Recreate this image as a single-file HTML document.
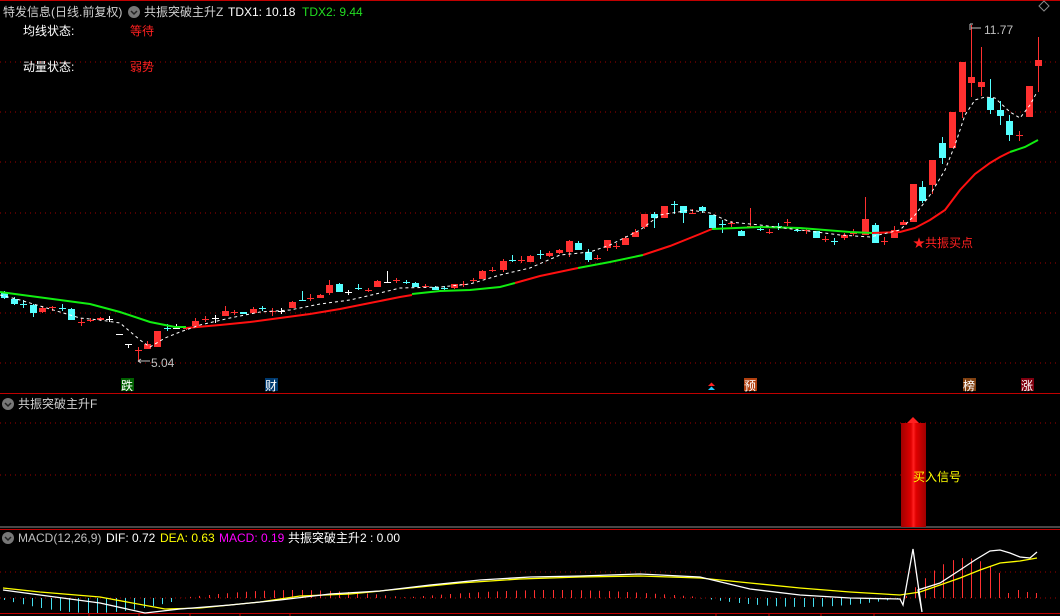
<!DOCTYPE html>
<html><head><meta charset="utf-8"><style>
html,body{margin:0;padding:0;background:#000;width:1060px;height:616px;overflow:hidden}
svg{display:block}
text{font-family:"Liberation Sans","Noto Sans CJK SC",sans-serif;font-size:12px}
</style></head><body>
<svg id="s" width="1060" height="616" xmlns="http://www.w3.org/2000/svg">
<defs>
<linearGradient id="col" x1="0" x2="1">
<stop offset="0" stop-color="#a00000"/><stop offset="0.4" stop-color="#e00000"/><stop offset="0.5" stop-color="#ff2020"/><stop offset="0.6" stop-color="#e00000"/><stop offset="1" stop-color="#a00000"/>
</linearGradient>
</defs>
<line x1="0" y1="0.5" x2="1060" y2="0.5" stroke="#c00000"/>
<g stroke="#a00000" stroke-dasharray="1 4">
<line x1="0" y1="62" x2="1060" y2="62"/><line x1="0" y1="112" x2="1060" y2="112"/>
<line x1="0" y1="162" x2="1060" y2="162"/><line x1="0" y1="213" x2="1060" y2="213"/>
<line x1="0" y1="263" x2="1060" y2="263"/><line x1="0" y1="313" x2="1060" y2="313"/>
<line x1="0" y1="363" x2="1060" y2="363"/>
<line x1="0" y1="423" x2="1060" y2="423"/><line x1="0" y1="475" x2="1060" y2="475"/>
<line x1="0" y1="572" x2="1060" y2="572"/><line x1="0" y1="598" x2="1060" y2="598"/>
</g>
<line x1="0" y1="393.5" x2="1060" y2="393.5" stroke="#c00000"/>
<line x1="0" y1="527" x2="1060" y2="527" stroke="#909090"/>
<line x1="0" y1="529.5" x2="1060" y2="529.5" stroke="#c00000"/>
<line x1="0" y1="613.5" x2="1060" y2="613.5" stroke="#c00000"/>
<g id="cd"></g>
<g id="ln" fill="none"></g>
<!-- header -->
<text x="3" y="16" fill="#d0d0d0">特发信息(日线.前复权)</text>
<circle cx="134" cy="12" r="6" fill="#777"/><path d="M131 11 l3 3 l3 -3" stroke="#222" stroke-width="1.5" fill="none"/>
<text x="144" y="16" fill="#d0d0d0">共振突破主升Z</text>
<text x="228" y="16" fill="#fff">TDX1: 10.18</text>
<text x="302" y="16" fill="#22dd22">TDX2: 9.44</text>
<text x="23" y="35" fill="#fff">均线状态:</text><text x="130" y="35" fill="#ff2020">等待</text>
<text x="23" y="71" fill="#fff">动量状态:</text><text x="130" y="71" fill="#ff2020">弱势</text>
<text x="151" y="367" fill="#c0c0c0">5.04</text>
<path d="M138 361 h12 M138 361 l3 -2 M138 361 l3 2" stroke="#c0c0c0" fill="none"/>
<text x="984" y="34" fill="#c0c0c0">11.77</text>
<path d="M970 24 v6 M970 24 h3 M971 28 h10" stroke="#c0c0c0" fill="none"/>
<path d="M1044 1 l5 5 -5 5 -5 -5z" stroke="#888" fill="none"/>
<text x="913" y="247" fill="#ff2020" font-size="12">★共振买点</text>
<!-- labels -->
<rect x="121" y="378" width="13" height="13" fill="#006000"/><text x="121" y="390" fill="#fff">跌</text>
<rect x="265" y="378" width="13" height="13" fill="#003a70"/><text x="265" y="390" fill="#fff">财</text>
<path d="M708 386 l3.5 -3.5 3.5 3.5z" fill="#ff2020"/><path d="M708 390 l3.5 -3.5 3.5 3.5z" fill="#22ccff"/>
<rect x="744" y="378" width="13" height="13" fill="#b04010"/><text x="744" y="390" fill="#fff">预</text>
<rect x="963" y="378" width="13" height="13" fill="#804010"/><text x="963" y="390" fill="#fff">榜</text>
<rect x="1021" y="378" width="13" height="13" fill="#800010"/><text x="1021" y="390" fill="#fff">涨</text>
<!-- panel2 -->
<circle cx="8" cy="404" r="6" fill="#777"/><path d="M5 403 l3 3 l3 -3" stroke="#222" stroke-width="1.5" fill="none"/>
<text x="18" y="408" fill="#d0d0d0">共振突破主升F</text>
<rect x="901" y="423" width="25" height="104" fill="url(#col)"/>
<path d="M907 423 l6 -6 6 6z" fill="#ff2020"/>
<text x="913" y="481" fill="#ffff00">买入信号</text>
<!-- macd header -->
<circle cx="8" cy="538" r="6" fill="#777"/><path d="M5 537 l3 3 l3 -3" stroke="#222" stroke-width="1.5" fill="none"/>
<text x="18" y="542" fill="#c0c0c0">MACD(12,26,9)</text>
<text x="106" y="542" fill="#fff">DIF: 0.72</text>
<text x="160" y="542" fill="#ffff00">DEA: 0.63</text>
<text x="219" y="542" fill="#ff00ff">MACD: 0.19</text>
<text x="288" y="542" fill="#fff">共振突破主升2 : 0.00</text>
<g stroke="#c00000"><line x1="89" y1="613" x2="89" y2="616"/><line x1="139" y1="613" x2="139" y2="616"/><line x1="190" y1="613" x2="190" y2="616"/><line x1="240" y1="613" x2="240" y2="616"/><line x1="290" y1="613" x2="290" y2="616"/><line x1="716" y1="613" x2="716" y2="616"/><line x1="769" y1="613" x2="769" y2="616"/><line x1="821" y1="613" x2="821" y2="616"/><line x1="874" y1="613" x2="874" y2="616"/></g>
</svg>
<script>
var NS="http://www.w3.org/2000/svg";
function el(p,t,a){var e=document.createElementNS(NS,t);for(var k in a)e.setAttribute(k,a[k]);p.appendChild(e);return e;}
var cd=document.getElementById('cd'),ln=document.getElementById('ln');
var R='#ff3030',C='#55ffff',W='#ffffff';
// x, top, bottom, high, low, color
var K=[[4,293,298,291,299,C],[14,299,304,297,305,C],[23,304,304,300,308,C],[33,305,313,304,317,C],[42,308,312,306,313,R],[52,307,307,306,311,R],[62,308,308,304,311,C],[71,309,320,308,320,C],[81,322,322,318,326,R],[90,320,320,318,322,R],[100,318,320,317,321,R],[109,319,319,316,322,W],[119,334,334,334,334,W],[128,344,344,344,348,W],[138,350,350,347,362,R],[147,344,349,341,349,R],[157,331,347,331,347,R],[167,328,328,324,331,C],[176,328,328,324,328,W],[186,328,329,328,330,R],[195,321,326,318,326,R],[205,319,319,316,322,R],[215,318,318,315,323,W],[225,311,316,306,316,R],[234,312,312,310,315,R],[243,312,314,312,314,C],[253,309,313,307,313,R],[262,308,308,306,311,C],[272,311,311,308,316,R],[281,311,311,308,314,W],[292,302,308,301,308,R],[302,300,300,291,300,C],[310,298,298,294,301,R],[320,295,298,294,298,R],[329,285,293,280,295,R],[339,284,292,283,292,C],[348,292,292,290,295,W],[358,288,288,284,290,C],[368,290,291,288,292,R],[377,281,287,280,287,R],[387,282,282,271,283,W],[396,280,281,278,283,R],[406,282,282,280,284,C],[415,283,287,282,287,C],[425,286,287,284,288,R],[435,287,290,286,290,C],[444,288,289,286,290,C],[454,284,288,284,289,R],[463,284,284,281,287,R],[473,280,281,278,282,R],[482,271,279,270,279,R],[492,270,270,267,272,R],[503,261,270,259,272,R],[512,260,260,255,262,C],[521,260,260,256,263,R],[530,256,262,255,262,R],[540,254,254,250,259,C],[549,253,256,251,257,R],[559,250,253,249,254,R],[569,241,252,240,257,R],[578,243,250,241,250,C],[588,252,260,249,262,C],[597,258,259,255,260,R],[607,240,248,240,251,R],[616,246,246,243,249,R],[625,238,245,236,245,R],[635,232,237,229,237,R],[644,214,227,214,229,R],[654,214,218,212,228,C],[664,206,218,206,218,R],[674,204,204,201,214,C],[683,206,213,206,223,C],[692,213,213,209,214,R],[702,207,211,206,213,C],[712,215,228,215,228,C],[722,224,224,220,233,C],[731,223,223,221,227,R],[741,231,236,230,236,C],[750,226,228,208,228,R],[760,229,230,226,231,C],[769,232,232,229,234,R],[778,226,226,223,230,C],[787,222,222,219,226,R],[797,230,230,228,232,C],[806,230,231,228,234,R],[816,231,238,231,238,C],[825,239,239,236,242,R],[834,241,241,238,245,C],[844,235,238,233,240,R],[853,232,234,229,236,R],[865,219,235,197,235,R],[875,225,243,223,243,C],[884,241,241,237,245,R],[894,230,238,226,238,R],[903,222,225,220,225,R],[913,184,222,184,222,R],[922,187,201,181,203,C],[932,160,185,160,194,R],[942,143,158,137,164,C],[952,112,148,112,148,R],[962,62,112,62,118,R],[971,77,83,25,97,R],[981,82,87,47,96,R],[990,98,110,79,114,C],[1000,110,116,101,125,C],[1009,121,135,115,141,C],[1019,135,135,131,141,R],[1029,86,117,86,117,R],[1038,60,66,37,92,R]];
K.forEach(function(k){var x=k[0],c=k[5];
 el(cd,'line',{x1:x+.5,x2:x+.5,y1:k[3],y2:k[4],stroke:c});
 var h=k[2]-k[1];
 if(h<1)el(cd,'line',{x1:x-3,x2:x+4,y1:k[1]+.5,y2:k[1]+.5,stroke:c});
 else el(cd,'rect',{x:x-3,y:k[1],width:7,height:h,fill:c});
});
function pl(pts,col,w,dash){el(ln,'polyline',{points:pts.map(function(p){return p.join(',')}).join(' '),stroke:col,'stroke-width':w||1,'stroke-dasharray':dash||'none',fill:'none'});}
pl([[0,292],[30,296],[60,300],[90,304],[120,312],[150,322],[175,327],[186,327]],'#11ee11',2);
pl([[186,328],[220,325],[250,322],[280,318],[310,314],[340,309],[370,303],[400,297],[412,295]],'#ff1010',2);
pl([[412,294],[440,291],[470,290],[500,287],[515,283]],'#11ee11',2);
pl([[515,283],[540,276],[578,268]],'#ff1010',2);
pl([[578,268],[610,262],[643,255]],'#11ee11',2);
pl([[643,255],[670,246],[700,234],[712,229]],'#ff1010',2);
pl([[712,229],[760,227],[800,228],[850,232],[872,233]],'#11ee11',2);
pl([[872,233],[900,232],[915,228],[930,220],[945,210],[960,190],[975,174],[990,163],[1000,157],[1010,152]],'#ff1010',2);
pl([[1010,152],[1025,147],[1038,140]],'#11ee11',2);
pl([[0,295],[20,300],[40,306],[60,312],[80,318],[100,320],[120,323],[140,340],[150,347],[165,338],[180,332],[200,325],[230,318],[260,312],[290,310],[320,304],[350,300],[380,293],[400,288],[440,287],[470,284],[500,275],[530,268],[560,255],[590,252],[610,245],[640,230],[660,215],[690,210],[710,213],[730,222],[760,225],[800,230],[840,235],[870,237],[900,230],[915,215],[930,195],[945,170],[955,145],[965,115],[975,100],[985,97],[995,98],[1010,112],[1020,118],[1030,105],[1037,92]],'#fff',1,'3 3');
// macd histogram
for(var x=4;x<1040;x+=9.3){var v;
 if(x<180)v=-Math.sin((x-4)/176*Math.PI)*13-2;
 else if(x<410)v=Math.sin((x-180)/230*Math.PI)*8;
 else if(x<700)v=Math.sin((x-410)/290*Math.PI)*7+1;
 else if(x<905)v=-Math.sin((x-700)/205*Math.PI)*9;
 else v=Math.max(2,Math.sin((x-905)/120*Math.PI)*40);
 if(x>1000)v=[5,8,6,10][Math.floor(x)%4];
 var c=v<0?'#44ddee':'#ff3030';
 el(ln,'line',{x1:Math.round(x)+.5,x2:Math.round(x)+.5,y1:598,y2:598-v,stroke:c});
}
pl([[3,588],[40,592],[100,597],[165,609],[200,608],[260,602],[300,596],[350,594],[400,589],[460,583],[520,579],[580,577],[640,576],[700,578],[750,583],[800,588],[850,592],[900,595],[920,592],[940,585],[960,578],[980,570],[1000,563],[1020,561],[1037,558]],'#ffff00',1.3);
pl([[3,590],[40,595],[100,603],[145,613],[180,609],[230,605],[280,600],[330,594],[380,591],[430,585],[480,580],[530,577],[580,576],[640,574],[680,576],[700,577],[750,589],[800,595],[850,598],[900,599],[903,605],[913,549],[922,612],[918,590],[940,583],[960,570],[975,560],[990,551],[1000,550],[1010,553],[1020,557],[1030,558],[1037,552]],'#fff',1.3);
</script>
</body></html>
